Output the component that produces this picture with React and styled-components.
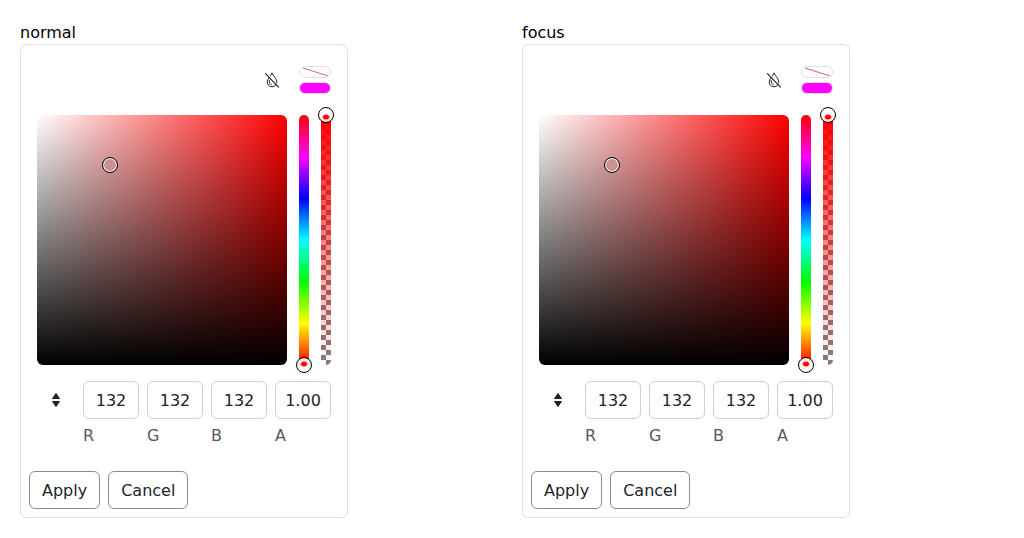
import React, { useId, useState } from "react";
import styled, { createGlobalStyle, css } from "styled-components";

const GlobalStyle = createGlobalStyle`
  *, *::before, *::after { box-sizing: border-box; }
  body {
    margin: 0;
    background: #fff;
    color: #000;
    font-family: "DejaVu Sans", Verdana, sans-serif;
    font-size: 16px;
    line-height: 22px;
  }
`;

const Page = styled.main`
  display: grid;
  grid-template-columns: repeat(2, minmax(0, 1fr));
  gap: 20px;
  padding: 22px 20px 20px;
`;

const Example = styled.section`
  display: flex;
  flex-direction: column;
  align-items: flex-start;
`;

const Title = styled.h2`
  margin: 0;
  font-size: inherit;
  font-weight: 400;
`;

const Card = styled.form`
  padding: 8px;
  border: 1px solid #dfe0e2;
  border-radius: 6px;
  color: #22242a;
`;

const Picker = styled.div`
  padding: 8px;
`;

const Header = styled.div`
  display: flex;
  justify-content: flex-end;
  align-items: center;
  gap: 8px;
  margin-bottom: 16px;
`;

const IconButton = styled.button`
  display: flex;
  align-items: center;
  justify-content: center;
  width: 38px;
  height: 38px;
  padding: 0;
  border: 0;
  background: none;
  color: inherit;
`;

const Swatches = styled.div`
  display: flex;
  flex-direction: column;
  gap: 4px;
`;

const Swatch = styled.div`
  width: 32px;
  height: 12px;
  overflow: hidden;
  border: 1px solid #dfe0e2;
  border-radius: 6px;
  background: ${(p) => p.$color};

  svg { display: block; }
`;

const Areas = styled.div`
  display: flex;
  gap: 12px;
`;

const Palette = styled.div`
  position: relative;
  width: 250px;
  height: 250px;
  border-radius: 6px;
  background:
    linear-gradient(to top, #000, transparent),
    linear-gradient(to right, #fff, transparent),
    #f00;
`;

const Marker = styled.div`
  position: absolute;
  left: 29%;
  top: 20%;
  width: 16px;
  height: 16px;
  margin: -8px;
  border: 1px solid #000;
  border-radius: 50%;
  background: #cc9191;
  box-shadow: inset 0 0 0 1px #fff;
`;

const hueTrack = css`
  background: linear-gradient(to top, #f00, #ff0, #0f0, #0ff, #00f, #f0f, #f00);
`;

const alphaTrack = css`
  background:
    linear-gradient(to bottom, #f00, rgba(255, 0, 0, 0)),
    conic-gradient(#fff 25%, #808080 0 50%, #fff 0 75%, #808080 0) 0 0 / 10px 10px;
`;

const Track = styled.div`
  position: relative;
  width: 10px;
  height: 250px;
  border-radius: 5px;
  ${(p) => (p.$kind === "hue" ? hueTrack : alphaTrack)}
`;

const Range = styled.input`
  position: absolute;
  top: -8px;
  left: -3px;
  width: 16px;
  height: 266px;
  margin: 0;
  appearance: none;
  background: none;
  writing-mode: vertical-lr;
  direction: rtl;

  &::-webkit-slider-thumb {
    appearance: none;
    width: 16px;
    height: 16px;
    border: 1px solid #000;
    border-radius: 50%;
    background:
      radial-gradient(
        ellipse 4px 3px at 50% ${(p) => (p.$kind === "hue" ? "6px" : "9px")},
        #f00 60%,
        transparent
      ),
      linear-gradient(to bottom, ${(p) => (p.$kind === "hue" ? "#ffdada, #fff 60%" : "#fff 50%, #ffd0d0")});
    box-shadow: 0 0 8px rgba(0, 0, 0, 0.05);
  }
`;

const Sliders = styled.div`
  display: flex;
  gap: 12px;
`;

const Values = styled.div`
  display: flex;
  align-items: flex-start;
  gap: 8px;
  margin-top: 16px;
`;

const Channel = styled.div`
  display: flex;
  flex-direction: column;
  gap: 6px;
`;

const ChannelInput = styled.input`
  width: 56px;
  height: 38px;
  padding: 0;
  border: 1px solid #cfd0d2;
  border-radius: 6px;
  background: #fff;
  color: inherit;
  font: inherit;
  text-align: center;
`;

const ChannelLabel = styled.label`
  color: #555960;
`;

const Actions = styled.div`
  display: flex;
  gap: 8px;
  margin-top: 16px;
`;

const ActionButton = styled.button`
  height: 38px;
  padding: 2px 12px 0;
  border: 1px solid #8b8a99;
  border-radius: 6px;
  background: #fff;
  color: inherit;
  font: inherit;
`;

const SortIcon = () => (
  <svg width="16" height="16" viewBox="0 0 16 16" fill="currentColor" aria-hidden="true">
    <path d="M8 .8 12 6.500Q12 7 11.500 7H4.500Q4 7 4 6.500ZM8 15.200 12 9.500Q12 9 11.500 9H4.500Q4 9 4 9.500Z" />
  </svg>
);

const NoColorIcon = () => (
  <svg width="16" height="16" viewBox="0 0 16 16" fill="none" stroke="currentColor" strokeLinecap="round" aria-hidden="true">
    <path d="M8 1.300C6.800 4 3.200 6.500 3.200 10a4.800 4.800 0 0 0 9.600 0C12.800 6.500 9.500 4.200 8 1.300Z" />
    <path d="M5.300 8.500C4.800 10.800 5.800 12.200 7.300 12.700" />
    <path d="M2.400 1.300 15.400 14.800" stroke="#fff" />
    <path d="M1.500 1.600 14.500 15.100" strokeWidth="1.200" />
  </svg>
);

function ColorPicker({ title }) {
  const id = useId();
  const [values, setValues] = useState({ R: "132", G: "132", B: "132", A: "1.00" });

  return (
    <Example>
      <Title>{title}</Title>
      <Card aria-label={title} onSubmit={(e) => e.preventDefault()}>
        <Picker>
          <Header>
            <IconButton type="button" aria-label="Clear color">
              <NoColorIcon />
            </IconButton>
            <Swatches>
              <Swatch $color="#fff">
                <svg width="30" height="10" viewBox="0 0 30 10" aria-hidden="true">
                  <path d="M3 1 28 9" stroke="#dc3545" strokeWidth="0.8" />
                </svg>
              </Swatch>
              <Swatch $color="#f0f" />
            </Swatches>
          </Header>
          <Areas>
            <Palette>
              <Marker />
            </Palette>
            <Sliders>
              <Track $kind="hue">
                <Range $kind="hue" type="range" aria-label="Hue" min="0" max="360" defaultValue="0" />
              </Track>
              <Track $kind="alpha">
                <Range $kind="alpha" type="range" aria-label="Alpha" min="0" max="1" step="0.01" defaultValue="1" />
              </Track>
            </Sliders>
          </Areas>
          <Values>
            <IconButton type="button" aria-label="Change color format">
              <SortIcon />
            </IconButton>
            {Object.keys(values).map((name) => (
              <Channel key={name}>
                <ChannelInput
                  id={id + name}
                  value={values[name]}
                  onChange={(e) => setValues({ ...values, [name]: e.target.value })}
                />
                <ChannelLabel htmlFor={id + name}>{name}</ChannelLabel>
              </Channel>
            ))}
          </Values>
        </Picker>
        <Actions>
          <ActionButton type="submit">Apply</ActionButton>
          <ActionButton type="button">Cancel</ActionButton>
        </Actions>
      </Card>
    </Example>
  );
}

export default function App() {
  return (
    <>
      <GlobalStyle />
      <Page>
        <ColorPicker title="normal" />
        <ColorPicker title="focus" />
      </Page>
    </>
  );
}
